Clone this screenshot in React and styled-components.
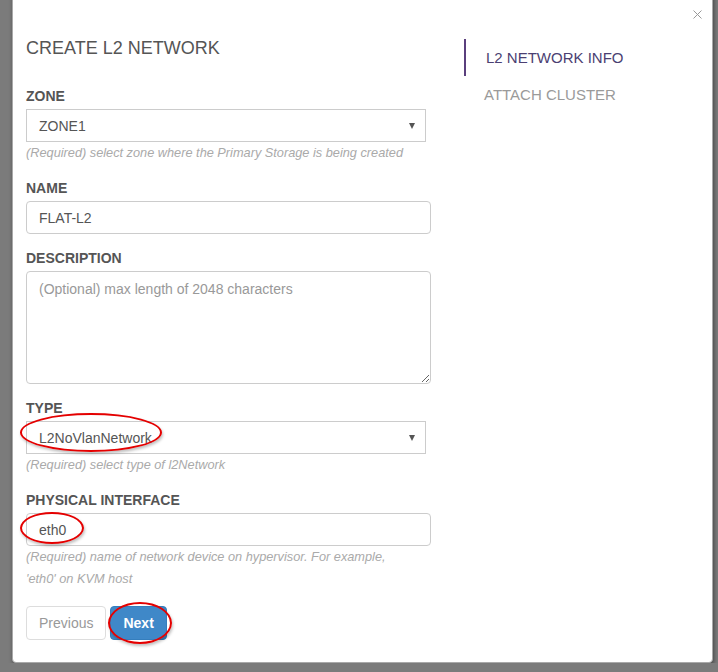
import React from 'react';
import styled, { createGlobalStyle } from 'styled-components';

const GlobalStyle = createGlobalStyle`
  html, body {
    margin: 0;
    padding: 0;
    background: #7b7b7b;
    font-family: "Liberation Sans", Arial, sans-serif;
    overflow: hidden;
  }
`;

const Modal = styled.div`
  position: relative;
  box-sizing: border-box;
  margin: -8px 0 0 12px;
  width: 701px;
  height: 671px;
  background: #fff;
  border: 1px solid #a9a9a9;
  border-radius: 4px;
  box-shadow: 1px 2px 4px rgba(0, 0, 0, 0.45);
  display: flex;
`;

const CloseButton = styled.button`
  position: absolute;
  top: 15px;
  right: 9px;
  width: 12px;
  height: 12px;
  padding: 0;
  border: 0;
  background: none;
  display: flex;
  align-items: center;
  justify-content: center;
`;

const FormColumn = styled.div`
  width: 405px;
  padding: 45px 0 0 13px;
`;

const Title = styled.h3`
  margin: 0 0 29px;
  font-size: 18px;
  line-height: 20px;
  font-weight: normal;
  color: #555;
`;

const Group = styled.div`
  margin-bottom: 15px;
`;

const Label = styled.label`
  display: block;
  margin-bottom: 4px;
  font-size: 14px;
  line-height: 18px;
  font-weight: bold;
  color: #555;
`;

const Field = styled.div`
  position: relative;
`;

const FakeSelect = styled.div`
  box-sizing: border-box;
  width: 400px;
  height: 33px;
  padding: 0 12px;
  border: 1px solid #ccc;
  display: flex;
  align-items: center;
  justify-content: space-between;
  font-size: 14px;
  color: #555;

  &::after {
    content: '';
    margin-right: -2px;
    border-left: 3.5px solid transparent;
    border-right: 3.5px solid transparent;
    border-top: 6px solid #555;
  }
`;

const TextInput = styled.input`
  box-sizing: border-box;
  display: block;
  width: 405px;
  height: 33px;
  margin: 0;
  padding: 0 12px;
  border: 1px solid #ccc;
  border-radius: 4px;
  font-family: inherit;
  font-size: 14px;
  color: #555;
  outline: none;
`;

const TextArea = styled.textarea`
  box-sizing: border-box;
  display: block;
  width: 405px;
  height: 113px;
  margin: 0;
  padding: 7px 12px;
  border: 1px solid #ccc;
  border-radius: 4px;
  font-family: inherit;
  font-size: 14px;
  line-height: 20px;
  color: #555;
  outline: none;

  &::placeholder {
    color: #999;
  }
`;

const Help = styled.p`
  max-width: 385px;
  margin: 0;
  font-size: 12.75px;
  line-height: 22px;
  font-style: italic;
  color: #aaa;
`;

const Actions = styled.div`
  display: flex;
  gap: 4px;
  margin-top: 16px;
`;

const Button = styled.button`
  position: relative;
  height: 34px;
  padding: 0 12px;
  border-radius: 4px;
  font-family: inherit;
  font-size: 14px;
  border: 1px solid ${p => (p.$primary ? '#357ebd' : '#ddd')};
  background: ${p => (p.$primary ? '#3f88c8' : '#fff')};
  color: ${p => (p.$primary ? '#fff' : '#999')};
  font-weight: ${p => (p.$primary ? 'bold' : 'normal')};
`;

const Mark = styled.span`
  position: absolute;
  box-sizing: border-box;
  border: 2px solid #e40000;
  border-radius: 50%;
  box-shadow: 1px 2px 3px rgba(0, 0, 0, 0.25);
  pointer-events: none;
`;

const StepColumn = styled.nav`
  padding: 46px 0 0 33px;
`;

const Step = styled.div`
  height: 37px;
  line-height: 37px;
  padding-left: 20px;
  border-left: ${p => (p.$active ? '2px solid #5a3f7d' : '0')};
  font-size: 15px;
  color: ${p => (p.$active ? '#4b3f72' : '#9a9a9a')};
`;

export default function App() {
  return (
    <>
      <GlobalStyle />
      <Modal>
        <CloseButton aria-label="close">
          <svg width="9" height="9" viewBox="0 0 9 9">
            <path d="M0.5 0.5 L8.5 8.5 M8.5 0.5 L0.5 8.5" stroke="#999" strokeWidth="1" />
          </svg>
        </CloseButton>

        <FormColumn>
          <Title>CREATE L2 NETWORK</Title>

          <Group>
            <Label>ZONE</Label>
            <FakeSelect>ZONE1</FakeSelect>
            <Help>(Required) select zone where the Primary Storage is being created</Help>
          </Group>

          <Group>
            <Label>NAME</Label>
            <TextInput readOnly value="FLAT-L2" />
          </Group>

          <Group>
            <Label>DESCRIPTION</Label>
            <TextArea placeholder="(Optional) max length of 2048 characters" />
          </Group>

          <Group>
            <Label>TYPE</Label>
            <Field>
              <FakeSelect>L2NoVlanNetwork</FakeSelect>
              <Mark style={{ left: -6, top: -8, width: 142, height: 39 }} />
            </Field>
            <Help>(Required) select type of l2Network</Help>
          </Group>

          <Group>
            <Label>PHYSICAL INTERFACE</Label>
            <Field>
              <TextInput readOnly value="eth0" />
              <Mark style={{ left: -6, top: -1, width: 64, height: 32 }} />
            </Field>
            <Help>(Required) name of network device on hypervisor. For example, 'eth0' on KVM host</Help>
          </Group>

          <Actions>
            <Button>Previous</Button>
            <Button $primary>
              Next
              <Mark style={{ left: -3, top: -5, width: 64, height: 42 }} />
            </Button>
          </Actions>
        </FormColumn>

        <StepColumn>
          <Step $active>L2 NETWORK INFO</Step>
          <Step>ATTACH CLUSTER</Step>
        </StepColumn>
      </Modal>
    </>
  );
}
